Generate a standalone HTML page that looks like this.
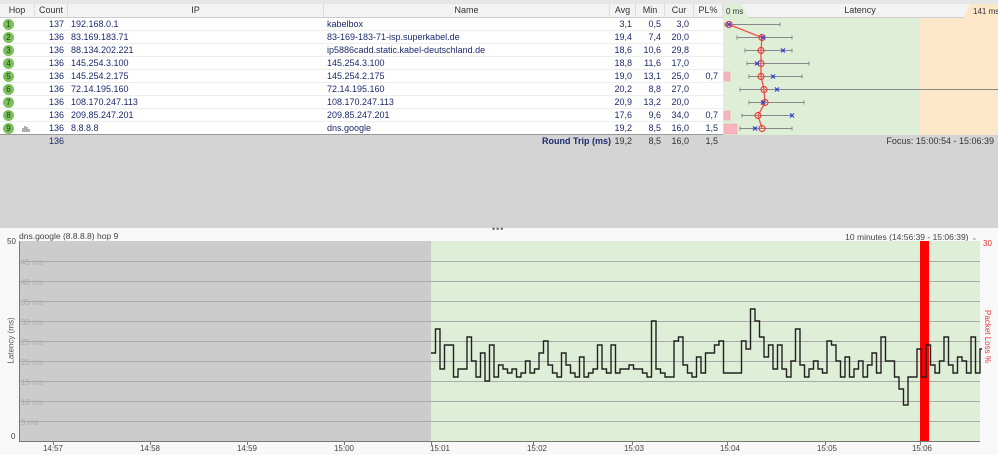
<!DOCTYPE html>
<html><head><meta charset="utf-8"><style>
*{margin:0;padding:0;box-sizing:border-box}
body{width:998px;height:455px;overflow:hidden;background:#fff;font-family:"Liberation Sans",sans-serif;font-size:9px;color:#333;position:relative}
.a{position:absolute;white-space:nowrap}
.hd{position:absolute;top:4px;height:14px;background:#f3f3f3;border-right:1px solid #ddd;border-bottom:1px solid #ccc;text-align:center;line-height:13px;color:#333}
.row{position:absolute;left:0;width:723px;height:13px;border-bottom:1px solid #eee}
.c{position:absolute;top:0;line-height:13px;color:#1b2a6b}
.r{text-align:right}
.hop{position:absolute;left:3px;top:1px;width:11px;height:11px;border-radius:50%;background:#7cc05e;color:#1f3d10;font-size:8px;line-height:11px;text-align:center}
</style></head><body>
<div class="a" style="left:0;top:0;width:998px;height:4px;background:#e6e6e6"></div>
<div class="hd" style="left:0;width:35px">Hop</div>
<div class="hd" style="left:35px;width:33px">Count</div>
<div class="hd" style="left:68px;width:256px">IP</div>
<div class="hd" style="left:324px;width:286px">Name</div>
<div class="hd" style="left:610px;width:26px">Avg</div>
<div class="hd" style="left:636px;width:29px">Min</div>
<div class="hd" style="left:665px;width:29px">Cur</div>
<div class="hd" style="left:694px;width:29px">PL%</div>
<div class="hd" style="left:723px;width:275px;background:#f3f3f3">Latency</div>
<svg class="a" style="left:723px;top:4px" width="275" height="14"><path d="M0,0H18L26,14H0Z" fill="#dfeed6"/><path d="M275,0H247L240,14H275Z" fill="#fde7c9"/><text x="3" y="10" font-size="8" font-family="Liberation Sans" fill="#333">0 ms</text><text x="250" y="10" font-size="8" font-family="Liberation Sans" fill="#333">141 ms</text></svg>
<div class="a" style="left:723px;top:18px;width:197px;height:117px;background:#dfeed6"></div>
<div class="a" style="left:920px;top:18px;width:78px;height:117px;background:#fde7c9"></div>

<div class="row" style="top:18px"><div class="hop">1</div><div class="c r" style="left:35px;width:29px">137</div><div class="c" style="left:71px">192.168.0.1</div><div class="c" style="left:327px">kabelbox</div><div class="c r" style="left:606px;width:26px">3,1</div><div class="c r" style="left:632px;width:29px">0,5</div><div class="c r" style="left:660px;width:29px">3,0</div></div>
<div class="row" style="top:31px"><div class="hop">2</div><div class="c r" style="left:35px;width:29px">136</div><div class="c" style="left:71px">83.169.183.71</div><div class="c" style="left:327px">83-169-183-71-isp.superkabel.de</div><div class="c r" style="left:606px;width:26px">19,4</div><div class="c r" style="left:632px;width:29px">7,4</div><div class="c r" style="left:660px;width:29px">20,0</div></div>
<div class="row" style="top:44px"><div class="hop">3</div><div class="c r" style="left:35px;width:29px">136</div><div class="c" style="left:71px">88.134.202.221</div><div class="c" style="left:327px">ip5886cadd.static.kabel-deutschland.de</div><div class="c r" style="left:606px;width:26px">18,6</div><div class="c r" style="left:632px;width:29px">10,6</div><div class="c r" style="left:660px;width:29px">29,8</div></div>
<div class="row" style="top:57px"><div class="hop">4</div><div class="c r" style="left:35px;width:29px">136</div><div class="c" style="left:71px">145.254.3.100</div><div class="c" style="left:327px">145.254.3.100</div><div class="c r" style="left:606px;width:26px">18,8</div><div class="c r" style="left:632px;width:29px">11,6</div><div class="c r" style="left:660px;width:29px">17,0</div></div>
<div class="row" style="top:70px"><div class="hop">5</div><div class="c r" style="left:35px;width:29px">136</div><div class="c" style="left:71px">145.254.2.175</div><div class="c" style="left:327px">145.254.2.175</div><div class="c r" style="left:606px;width:26px">19,0</div><div class="c r" style="left:632px;width:29px">13,1</div><div class="c r" style="left:660px;width:29px">25,0</div><div class="c r" style="left:689px;width:29px">0,7</div></div>
<div class="row" style="top:83px"><div class="hop">6</div><div class="c r" style="left:35px;width:29px">136</div><div class="c" style="left:71px">72.14.195.160</div><div class="c" style="left:327px">72.14.195.160</div><div class="c r" style="left:606px;width:26px">20,2</div><div class="c r" style="left:632px;width:29px">8,8</div><div class="c r" style="left:660px;width:29px">27,0</div></div>
<div class="row" style="top:96px"><div class="hop">7</div><div class="c r" style="left:35px;width:29px">136</div><div class="c" style="left:71px">108.170.247.113</div><div class="c" style="left:327px">108.170.247.113</div><div class="c r" style="left:606px;width:26px">20,9</div><div class="c r" style="left:632px;width:29px">13,2</div><div class="c r" style="left:660px;width:29px">20,0</div></div>
<div class="row" style="top:109px"><div class="hop">8</div><div class="c r" style="left:35px;width:29px">136</div><div class="c" style="left:71px">209.85.247.201</div><div class="c" style="left:327px">209.85.247.201</div><div class="c r" style="left:606px;width:26px">17,6</div><div class="c r" style="left:632px;width:29px">9,6</div><div class="c r" style="left:660px;width:29px">34,0</div><div class="c r" style="left:689px;width:29px">0,7</div></div>
<div class="row" style="top:122px;border-bottom:1px solid #999"><div class="hop">9</div><svg class="a" style="left:22px;top:3px" width="8" height="7"><path d="M1,3v4M3,1v6M5,2v5M7,4v3" stroke="#777" stroke-width="1.2"/></svg><div class="c r" style="left:35px;width:29px">136</div><div class="c" style="left:71px">8.8.8.8</div><div class="c" style="left:327px">dns.google</div><div class="c r" style="left:606px;width:26px">19,2</div><div class="c r" style="left:632px;width:29px">8,5</div><div class="c r" style="left:660px;width:29px">16,0</div><div class="c r" style="left:689px;width:29px">1,5</div></div>

<svg class="a" style="left:723px;top:18px" width="275" height="117">
<g fill="#f7b4bd" stroke="#eea0aa" stroke-width=".5"><rect x="1" y="54" width="6" height="9"/><rect x="1" y="93" width="6" height="9"/><rect x="1" y="106" width="13" height="10"/></g>
<g stroke="#888" stroke-width="1" fill="none">
<path d="M2,6.5H57M2,4.5v4M57,4.5v4"/>
<path d="M14,19.5H69M14,17.5v4M69,17.5v4"/>
<path d="M22,32.5H69M22,30.5v4M69,30.5v4"/>
<path d="M24,45.5H86M24,43.5v4M86,43.5v4"/>
<path d="M26,58.5H79M26,56.5v4M79,56.5v4"/>
<path d="M17,71.5H275M17,69.5v4"/>
<path d="M26,84.5H81M26,82.5v4M81,82.5v4"/>
<path d="M19,97.5H68M19,95.5v4M68,95.5v4"/>
<path d="M17,110.5H69M17,108.5v4M69,108.5v4"/>
</g>
<polyline points="6,6.5 39,19.5 38,32.5 38,45.5 38,58.5 41,71.5 42,84.5 35,97.5 39,110.5" fill="none" stroke="#f0504a" stroke-width="1.3"/>
<g fill="none" stroke="#e8403a" stroke-width="1.2"><circle cx="6" cy="6.5" r="3"/><circle cx="39" cy="19.5" r="3"/><circle cx="38" cy="32.5" r="3"/><circle cx="38" cy="45.5" r="3"/><circle cx="38" cy="58.5" r="3"/><circle cx="41" cy="71.5" r="3"/><circle cx="42" cy="84.5" r="3"/><circle cx="35" cy="97.5" r="3"/><circle cx="39" cy="110.5" r="3"/></g>
<g stroke="#2a3be0" stroke-width="1.2"><path d="M4,4.5l4,4M8,4.5l-4,4"/><path d="M38,17.5l4,4M42,17.5l-4,4"/><path d="M58,30.5l4,4M62,30.5l-4,4"/><path d="M32,43.5l4,4M36,43.5l-4,4"/><path d="M48,56.5l4,4M52,56.5l-4,4"/><path d="M52,69.5l4,4M56,69.5l-4,4"/><path d="M38,82.5l4,4M42,82.5l-4,4"/><path d="M67,95.5l4,4M71,95.5l-4,4"/><path d="M30,108.5l4,4M34,108.5l-4,4"/></g>
</svg>

<div class="a" style="left:0;top:135px;width:998px;height:93px;background:#d4d4d4"></div>
<div class="a" style="left:35px;top:135px;width:29px;line-height:13px;text-align:right;color:#1b2a6b">136</div>
<div class="a" style="left:542px;top:135px;line-height:13px;color:#1b2a6b;font-weight:bold">Round Trip (ms)</div>
<div class="a" style="left:606px;top:135px;width:26px;line-height:13px;text-align:right">19,2</div>
<div class="a" style="left:632px;top:135px;width:29px;line-height:13px;text-align:right">8,5</div>
<div class="a" style="left:660px;top:135px;width:29px;line-height:13px;text-align:right">16,0</div>
<div class="a" style="left:689px;top:135px;width:29px;line-height:13px;text-align:right">1,5</div>
<div class="a" style="right:4px;top:135px;line-height:13px">Focus: 15:00:54 - 15:06:39</div>

<div class="a" style="left:0;top:228px;width:998px;height:227px;background:#f8f8f8"></div>
<div class="a" style="left:492px;top:224px;color:#666;font-size:9px;letter-spacing:1px">•••</div>
<div class="a" style="left:19px;top:231px;font-size:8.5px;color:#444">dns.google (8.8.8.8) hop 9</div>
<div class="a" style="right:20px;top:232px;font-size:8.5px;color:#444">10 minutes (14:56:39 - 15:06:39) <span style="color:#999">⌄</span></div>
<div class="a" style="left:7px;top:237px;font-size:8px;color:#444">50</div>
<div class="a" style="left:11px;top:432px;font-size:8px;color:#444">0</div>
<div class="a" style="left:983px;top:239px;font-size:8px;color:#e33">30</div>
<div class="a" style="left:-12px;top:336px;font-size:8px;color:#555;transform:rotate(-90deg)">Latency (ms)</div>
<div class="a" style="left:961px;top:332px;font-size:8px;color:#e33;transform:rotate(90deg)">Packet Loss %</div>

<svg class="a" style="left:0;top:0" width="998" height="455">
<rect x="19" y="241" width="412" height="200" fill="#cccccc"/>
<rect x="431" y="241" width="549" height="200" fill="#dfeed6"/>
<g stroke="#aaaaaa" stroke-width="1"><path d="M19,261.5H980M19,281.5H980M19,301.5H980M19,321.5H980M19,341.5H980M19,361.5H980M19,381.5H980M19,401.5H980M19,421.5H980"/></g>
<path d="M19.5,241V442M19,441.5H980" stroke="#777" stroke-width="1"/>
<g stroke="#777"><path d="M53.5,441v4M150.5,441v4M247.5,441v4M344.5,441v4M431.5,441v4M533.5,441v4M632.5,441v4M727.5,441v4M825.5,441v4M920.5,441v4"/></g>
<rect x="920" y="241" width="9" height="200" fill="#ff0000"/>
<path d="M431,353h4.5V329h4.5V369h4.5V345h4.5V345h4.5V377h4.5V369h4.5V369h4.5V337h4.5V361h4.5V377h4.5V353h4.5V381h4.5V345h4.5V377h4.5V365h4.5V369h4.5V373h4.5V369h4.5V377h4.5V373h4.5V361h4.5V373h4.5V369h4.5V353h4.5V341h4.5V365h4.5V373h4.5V377h4.5V353h4.5V365h4.5V373h4.5V377h4.5V357h4.5V377h4.5V373h4.5V369h4.5V345h4.5V369h4.5V373h4.5V345h4.5V373h4.5V369h4.5V369h4.5V365h4.5V369h4.5V369h4.5V373h4.5V377h4.5V321h4.5V369h4.5V373h4.5V377h4.5V377h4.5V341h4.5V337h4.5V365h4.5V373h4.5V377h4.5V357h4.5V373h4.5V353h4.5V353h4.5V345h4.5V341h4.5V373h4.5V373h4.5V373h4.5V373h4.5V341h4.5V349h4.5V309h4.5V321h4.5V337h4.5V357h4.5V345h4.5V369h4.5V345h4.5V369h4.5V377h4.5V361h4.5V329h4.5V365h4.5V377h4.5V369h4.5V361h4.5V369h4.5V373h4.5V341h4.5V345h4.5V361h4.5V377h4.5V357h4.5V377h4.5V369h4.5V361h4.5V377h4.5V365h4.5V353h4.5V373h4.5V337h4.5V361h4.5V361h4.5V377h4.5V389h4.5V405h4.5V377h4.5V377h4.5V349h4.5V377h4.5V345h4.5V365h4.5V373h4.5V361h4.5V337h4.5V365h4.5V373h4.5V357h4.5V361h4.5V373h4.5V337h4.5V373h4.5V349h2" fill="none" stroke="#222" stroke-width="1.4"/>
<g font-family="Liberation Sans" font-size="8" fill="#aaa"><text x="21" y="265">45 ms</text><text x="21" y="285">40 ms</text><text x="21" y="305">35 ms</text><text x="21" y="325">30 ms</text><text x="21" y="345">25 ms</text><text x="21" y="365">20 ms</text><text x="21" y="385">15 ms</text><text x="21" y="405">10 ms</text><text x="21" y="425">5 ms</text></g>
<g font-family="Liberation Sans" font-size="8" fill="#444" text-anchor="middle"><text x="53" y="451">14:57</text><text x="150" y="451">14:58</text><text x="247" y="451">14:59</text><text x="344" y="451">15:00</text><text x="440" y="451">15:01</text><text x="537" y="451">15:02</text><text x="634" y="451">15:03</text><text x="730" y="451">15:04</text><text x="827" y="451">15:05</text><text x="922" y="451">15:06</text></g>
</svg>
</body></html>
